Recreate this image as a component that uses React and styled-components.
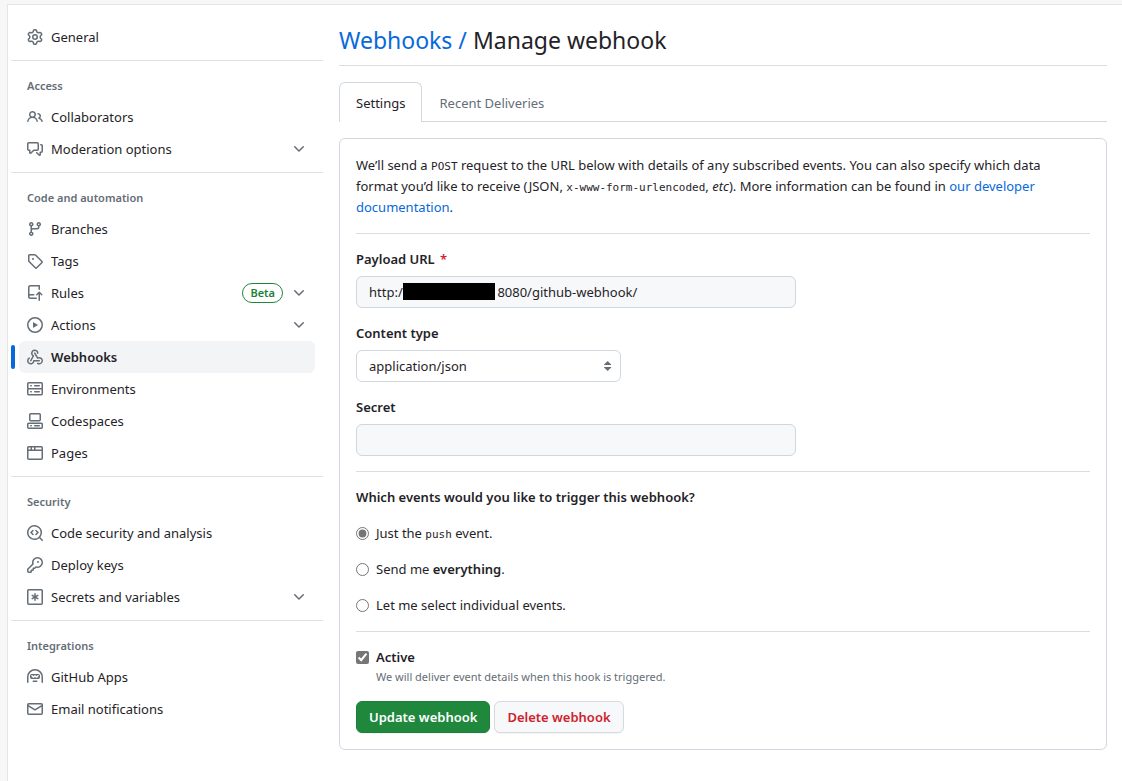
import React from "react";
import styled, { createGlobalStyle } from "styled-components";

const GlobalStyle = createGlobalStyle`
  *, *::before, *::after { box-sizing: border-box; }
  body {
    margin: 0;
    background: #f7f7f7;
    color: #1f2328;
    font: 400 13px/21px "Noto Sans", "Open Sans", sans-serif;
  }
  input, select, button { font: inherit; color: inherit; margin: 0; }
  a { color: #0969da; text-decoration: none; }
`;

const icons = {
  gear: ["M8 0a8.2 8.2 0 0 1 .701.031C9.444.095 9.99.645 10.16 1.29l.288 1.107c.018.066.079.158.212.224.231.114.454.243.668.386.123.082.233.09.299.071l1.103-.303c.644-.176 1.392.021 1.82.63.27.385.506.792.704 1.218.315.675.111 1.422-.364 1.891l-.814.806c-.049.048-.098.147-.088.294.016.257.016.515 0 .772-.01.147.038.246.088.294l.814.806c.475.469.679 1.216.364 1.891a7.977 7.977 0 0 1-.704 1.217c-.428.61-1.176.807-1.82.63l-1.102-.302c-.067-.019-.177-.011-.3.071a5.909 5.909 0 0 1-.668.386c-.133.066-.194.158-.211.224l-.29 1.106c-.168.646-.715 1.196-1.458 1.26a8.006 8.006 0 0 1-1.402 0c-.743-.064-1.289-.614-1.458-1.26l-.289-1.106c-.018-.066-.079-.158-.212-.224a5.738 5.738 0 0 1-.668-.386c-.123-.082-.233-.09-.299-.071l-1.103.303c-.644.176-1.392-.021-1.82-.63a8.12 8.12 0 0 1-.704-1.218c-.315-.675-.111-1.422.363-1.891l.815-.806c.05-.048.098-.147.088-.294a6.214 6.214 0 0 1 0-.772c.01-.147-.038-.246-.088-.294l-.815-.806C.635 6.045.431 5.298.746 4.623a7.92 7.92 0 0 1 .704-1.217c.428-.61 1.176-.807 1.82-.63l1.102.302c.067.019.177.011.3-.071.214-.143.437-.272.668-.386.133-.066.194-.158.211-.224l.29-1.106C6.009.645 6.556.095 7.299.03 7.53.01 7.764 0 8 0Zm-.571 1.525c-.036.003-.108.036-.137.146l-.289 1.105c-.147.561-.549.967-.998 1.189-.173.086-.34.183-.5.29-.417.278-.97.423-1.529.27l-1.103-.303c-.109-.03-.175.016-.195.045-.22.312-.412.644-.573.99-.014.031-.021.11.059.19l.815.806c.411.406.562.957.53 1.456a4.709 4.709 0 0 0 0 .582c.032.499-.119 1.05-.53 1.456l-.815.806c-.081.08-.073.159-.059.19.162.346.353.677.573.989.02.03.085.076.195.046l1.102-.303c.56-.153 1.113-.008 1.53.27.161.107.328.204.501.29.447.222.85.629.997 1.189l.289 1.105c.029.109.101.143.137.146a6.6 6.6 0 0 0 1.142 0c.036-.003.108-.036.137-.146l.289-1.105c.147-.561.549-.967.998-1.189.173-.086.34-.183.5-.29.417-.278.97-.423 1.529-.27l1.103.303c.109.029.175-.016.195-.045.22-.313.411-.644.573-.99.014-.031.021-.11-.059-.19l-.815-.806c-.411-.406-.562-.957-.53-1.456a4.709 4.709 0 0 0 0-.582c-.032-.499.119-1.05.53-1.456l.815-.806c.081-.08.073-.159.059-.19a6.464 6.464 0 0 0-.573-.989c-.02-.03-.085-.076-.195-.046l-1.102.303c-.56.153-1.113.008-1.53-.27a4.44 4.44 0 0 0-.501-.29c-.447-.222-.85-.629-.997-1.189l-.289-1.105c-.029-.11-.101-.143-.137-.146a6.6 6.6 0 0 0-1.142 0ZM11 8a3 3 0 1 1-6 0 3 3 0 0 1 6 0ZM9.5 8a1.5 1.5 0 1 0-3.001.001A1.5 1.5 0 0 0 9.5 8Z"],
  people: ["M2 5.5a3.5 3.5 0 1 1 5.898 2.549 5.508 5.508 0 0 1 3.034 4.084.75.75 0 1 1-1.482.235 4 4 0 0 0-7.9 0 .75.75 0 0 1-1.482-.236A5.507 5.507 0 0 1 3.102 8.05 3.493 3.493 0 0 1 2 5.5ZM11 4a3.001 3.001 0 0 1 2.22 5.018 5.01 5.01 0 0 1 2.56 3.012.749.749 0 0 1-.885.954.752.752 0 0 1-.549-.514 3.507 3.507 0 0 0-2.522-2.372.75.75 0 0 1-.574-.73v-.352a.75.75 0 0 1 .416-.672A1.5 1.5 0 0 0 11 5.5.75.75 0 0 1 11 4Zm-5.5-.5a2 2 0 1 0-.001 3.999A2 2 0 0 0 5.5 3.5Z"],
  discussion: ["M1.75 1h8.5c.966 0 1.75.784 1.75 1.75v5.5A1.75 1.75 0 0 1 10.25 10H7.061l-2.574 2.573A1.458 1.458 0 0 1 2 11.543V10h-.25A1.75 1.75 0 0 1 0 8.25v-5.5C0 1.784.784 1 1.75 1ZM1.5 2.75v5.5c0 .138.112.25.25.25h1a.75.75 0 0 1 .75.75v2.19l2.72-2.72a.749.749 0 0 1 .53-.22h3.5a.25.25 0 0 0 .25-.25v-5.5a.25.25 0 0 0-.25-.25h-8.5a.25.25 0 0 0-.25.25Zm13 2a.25.25 0 0 0-.25-.25h-.5a.75.75 0 0 1 0-1.5h.5c.966 0 1.75.784 1.75 1.75v5.5A1.75 1.75 0 0 1 14.25 12H14v1.543a1.458 1.458 0 0 1-2.487 1.03L9.22 12.28a.749.749 0 0 1 .326-1.275.749.749 0 0 1 .734.215l2.22 2.22v-2.19a.75.75 0 0 1 .75-.75h1a.25.25 0 0 0 .25-.25Z"],
  branch: ["M9.5 3.25a2.25 2.25 0 1 1 3 2.122V6A2.5 2.5 0 0 1 10 8.5H6a1 1 0 0 0-1 1v1.128a2.251 2.251 0 1 1-1.5 0V5.372a2.25 2.25 0 1 1 1.5 0v1.836A2.493 2.493 0 0 1 6 7h4a1 1 0 0 0 1-1v-.628A2.25 2.25 0 0 1 9.5 3.25Zm-6 0a.75.75 0 1 0 1.5 0 .75.75 0 0 0-1.5 0Zm8.25-.75a.75.75 0 1 0 0 1.5.75.75 0 0 0 0-1.5ZM4.25 12a.75.75 0 1 0 0 1.5.75.75 0 0 0 0-1.5Z"],
  tag: ["M1 7.775V2.75C1 1.784 1.784 1 2.75 1h5.025c.464 0 .91.184 1.238.513l6.25 6.25a1.75 1.75 0 0 1 0 2.474l-5.026 5.026a1.75 1.75 0 0 1-2.474 0l-6.25-6.25A1.752 1.752 0 0 1 1 7.775Zm1.5 0c0 .066.026.13.073.177l6.25 6.25a.25.25 0 0 0 .354 0l5.025-5.025a.25.25 0 0 0 0-.354l-6.25-6.25a.25.25 0 0 0-.177-.073H2.75a.25.25 0 0 0-.25.25ZM6 5a1 1 0 1 1 0 2 1 1 0 0 1 0-2Z"],
  rules: ["M1 2.5A2.5 2.5 0 0 1 3.5 0h8.75a.75.75 0 0 1 .75.75v3.5a.75.75 0 0 1-1.5 0V1.5h-8a1 1 0 0 0-1 1v6.708A2.493 2.493 0 0 1 3.5 9h3.25a.75.75 0 0 1 0 1.5H3.5a1 1 0 0 0 0 2h5.75a.75.75 0 0 1 0 1.5H3.5A2.5 2.5 0 0 1 1 11.5Zm13.23 7.79h-.001l-1.224-1.224v6.184a.75.75 0 0 1-1.5 0V9.066L10.28 10.29a.75.75 0 0 1-1.06-1.061l2.505-2.504a.75.75 0 0 1 1.06 0L15.29 9.23a.751.751 0 0 1-.018 1.042.751.751 0 0 1-1.042.018Z"],
  play: ["M8 0a8 8 0 1 1 0 16A8 8 0 0 1 8 0ZM1.5 8a6.5 6.5 0 1 0 13 0 6.5 6.5 0 0 0-13 0Zm4.879-2.773 4.264 2.559a.25.25 0 0 1 0 .428l-4.264 2.559A.25.25 0 0 1 6 10.559V5.442a.25.25 0 0 1 .379-.215Z"],
  webhook: [
    "M5.5 4.25a2.25 2.25 0 0 1 4.5 0 .75.75 0 0 0 1.5 0 3.75 3.75 0 1 0-6.14 2.889l-2.272 4.258a.75.75 0 0 0 1.324.706L7 7.25a.75.75 0 0 0-.309-1.015A2.25 2.25 0 0 1 5.5 4.25Z",
    "M7.364 3.607a.75.75 0 0 1 1.03.257l2.608 4.349a3.75 3.75 0 1 1-.628 6.785.75.75 0 0 1 .752-1.299 2.25 2.25 0 1 0-.033-3.88.75.75 0 0 1-1.03-.256L7.107 4.636a.75.75 0 0 1 .257-1.03Z",
    "M2.9 8.776A.75.75 0 0 1 2.625 9.8 2.25 2.25 0 1 0 6 11.75a.75.75 0 0 1 .75-.751h5.5a.75.75 0 0 1 0 1.5H7.425a3.751 3.751 0 1 1-5.55-3.998.75.75 0 0 1 1.024.274Z",
  ],
  server: ["M1.75 1h12.5c.966 0 1.75.784 1.75 1.75v4c0 .372-.116.717-.314 1 .198.283.314.628.314 1v4a1.75 1.75 0 0 1-1.75 1.75H1.75A1.75 1.75 0 0 1 0 12.75v-4c0-.358.109-.707.314-1a1.739 1.739 0 0 1-.314-1v-4C0 1.784.784 1 1.75 1ZM1.5 2.75v4c0 .138.112.25.25.25h12.5a.25.25 0 0 0 .25-.25v-4a.25.25 0 0 0-.25-.25H1.75a.25.25 0 0 0-.25.25Zm.25 5.75a.25.25 0 0 0-.25.25v4c0 .138.112.25.25.25h12.5a.25.25 0 0 0 .25-.25v-4a.25.25 0 0 0-.25-.25ZM7 4.75A.75.75 0 0 1 7.75 4h4.5a.75.75 0 0 1 0 1.5h-4.5A.75.75 0 0 1 7 4.75ZM7.75 10h4.5a.75.75 0 0 1 0 1.5h-4.5a.75.75 0 0 1 0-1.5ZM3 4.75A.75.75 0 0 1 3.75 4h.5a.75.75 0 0 1 0 1.5h-.5A.75.75 0 0 1 3 4.75ZM3.75 10h.5a.75.75 0 0 1 0 1.5h-.5a.75.75 0 0 1 0-1.5Z"],
  codespaces: [
    "M0 11.25c0-.966.784-1.75 1.75-1.75h12.5c.966 0 1.75.784 1.75 1.75v3A1.75 1.75 0 0 1 14.25 16H1.75A1.75 1.75 0 0 1 0 14.25Zm2-9.5C2 .784 2.784 0 3.75 0h8.5C13.216 0 14 .784 14 1.75v5a1.75 1.75 0 0 1-1.75 1.75h-8.5A1.75 1.75 0 0 1 2 6.75Zm1.75-.25a.25.25 0 0 0-.25.25v5c0 .138.112.25.25.25h8.5a.25.25 0 0 0 .25-.25v-5a.25.25 0 0 0-.25-.25Zm-2 9.5a.25.25 0 0 0-.25.25v3c0 .138.112.25.25.25h12.5a.25.25 0 0 0 .25-.25v-3a.25.25 0 0 0-.25-.25Z",
    "M7 12.75a.75.75 0 0 1 .75-.75h4.5a.75.75 0 0 1 0 1.5h-4.5a.75.75 0 0 1-.75-.75Zm-4 0a.75.75 0 0 1 .75-.75h.5a.75.75 0 0 1 0 1.5h-.5a.75.75 0 0 1-.75-.75Z",
  ],
  browser: ["M0 2.75C0 1.784.784 1 1.75 1h12.5c.966 0 1.75.784 1.75 1.75v10.5A1.75 1.75 0 0 1 14.25 15H1.75A1.75 1.75 0 0 1 0 13.25ZM14.5 6h-13v7.25c0 .138.112.25.25.25h12.5a.25.25 0 0 0 .25-.25Zm-6-3.5v2h6V2.75a.25.25 0 0 0-.25-.25ZM5 2.5v2h2v-2Zm-3.25 0a.25.25 0 0 0-.25.25V4.5h2v-2Z"],
  codescan: [
    "M8.47 4.97a.75.75 0 0 0 0 1.06L9.94 7.5 8.47 8.97a.75.75 0 1 0 1.06 1.06l2-2a.75.75 0 0 0 0-1.06l-2-2a.75.75 0 0 0-1.06 0ZM6.53 6.03a.75.75 0 0 0-1.06-1.06l-2 2a.75.75 0 0 0 0 1.06l2 2a.75.75 0 1 0 1.06-1.06L5.06 7.5l1.47-1.47Z",
    "M12.246 13.307a7.501 7.501 0 1 1 1.06-1.06l2.474 2.473a.749.749 0 0 1-.326 1.275.749.749 0 0 1-.734-.215ZM1.5 7.5a6.002 6.002 0 0 0 3.608 5.504 6.002 6.002 0 0 0 6.486-1.117.748.748 0 0 1 .292-.293A6 6 0 1 0 1.5 7.5Z",
  ],
  key: ["M10.5 0a5.499 5.499 0 1 1-1.288 10.848l-.932.932a.749.749 0 0 1-.53.22H7v.75a.749.749 0 0 1-.22.53l-.5.5a.749.749 0 0 1-.53.22H5v.75a.749.749 0 0 1-.22.53l-.5.5a.749.749 0 0 1-.53.22h-2A1.75 1.75 0 0 1 0 14.25v-2c0-.199.079-.389.22-.53l4.932-4.932A5.5 5.5 0 0 1 10.5 0Zm-4 5.5c-.001.431.069.86.205 1.269a.75.75 0 0 1-.181.768L1.5 12.56v1.69c0 .138.112.25.25.25h1.69l.06-.06v-1.19a.75.75 0 0 1 .75-.75h1.19l.06-.06v-1.19a.75.75 0 0 1 .75-.75h1.19l1.023-1.025a.75.75 0 0 1 .768-.18A4 4 0 1 0 6.5 5.5ZM11 6a1 1 0 1 1 0-2 1 1 0 0 1 0 2Z"],
  asterisk: [
    "M0 1.75C0 .784.784 0 1.75 0h12.5C15.216 0 16 .784 16 1.75v12.5A1.75 1.75 0 0 1 14.25 16H1.75A1.75 1.75 0 0 1 0 14.25ZM1.75 1.5a.25.25 0 0 0-.25.25v12.5c0 .138.112.25.25.25h12.5a.25.25 0 0 0 .25-.25V1.75a.25.25 0 0 0-.25-.25Z",
    "M8 4a.75.75 0 0 1 .75.75V6.7l1.69-.975a.75.75 0 0 1 .75 1.3L9.5 8l1.69.976a.75.75 0 0 1-.75 1.298L8.75 9.3v1.951a.75.75 0 0 1-1.5 0V9.299l-1.69.976a.75.75 0 0 1-.75-1.3L6.5 8l-1.69-.975a.75.75 0 0 1 .75-1.3l1.69.976V4.75A.75.75 0 0 1 8 4Z",
  ],
  hubot: [
    "M0 8a8 8 0 1 1 16 0v5.25a.75.75 0 0 1-1.5 0V8a6.5 6.5 0 1 0-13 0v5.25a.75.75 0 0 1-1.5 0Zm5.5 4.25a.75.75 0 0 1 .75-.75h3.5a.75.75 0 0 1 0 1.5h-3.5a.75.75 0 0 1-.75-.75ZM3 6.75C3 5.784 3.784 5 4.75 5h6.5c.966 0 1.75.784 1.75 1.75v1.5A1.75 1.75 0 0 1 11.25 10h-6.5A1.75 1.75 0 0 1 3 8.25Zm1.47-.53a.75.75 0 0 1 1.06 0l.97.97.97-.97a.75.75 0 0 1 1.06 0l.97.97.97-.97a.749.749 0 0 1 1.275.326.749.749 0 0 1-.215.734l-1.5 1.5a.75.75 0 0 1-1.06 0L8 7.81l-.97.97a.75.75 0 0 1-1.06 0l-1.5-1.5a.75.75 0 0 1 0-1.06Z",
  ],
  mail: ["M1.75 2h12.5c.966 0 1.75.784 1.75 1.75v8.5A1.75 1.75 0 0 1 14.25 14H1.75A1.75 1.75 0 0 1 0 12.25v-8.5C0 2.784.784 2 1.75 2ZM1.5 12.251c0 .138.112.25.25.25h12.5a.25.25 0 0 0 .25-.25V5.809L8.38 9.397a.75.75 0 0 1-.76 0L1.5 5.809v6.442Zm13-8.181v-.32a.25.25 0 0 0-.25-.25H1.75a.25.25 0 0 0-.25.25v.32L8 7.88Z"],
  chevron: ["M12.78 5.22a.749.749 0 0 1 0 1.06l-4.25 4.25a.749.749 0 0 1-1.06 0L3.22 6.28a.749.749 0 1 1 1.06-1.06L8 8.939l3.72-3.719a.749.749 0 0 1 1.06 0Z"],
  updown: ["M4.07 9.43l3.4 3.4a.25.25 0 0 0 .35 0l3.4-3.4A.25.25 0 0 0 11.04 9H4.25a.25.25 0 0 0-.18.43ZM4.07 6.57l3.4-3.4a.25.25 0 0 1 .35 0l3.4 3.4a.25.25 0 0 1-.18.43H4.25a.25.25 0 0 1-.18-.43Z"],
};

const Svg = styled.svg`
  flex: none;
  display: block;
  fill: #656d76;
`;

function Icon({ name, className }) {
  return (
    <Svg className={className} width="16" height="16" viewBox="0 0 16 16" fillRule="evenodd" aria-hidden="true">
      {icons[name].map((d) => <path key={d} d={d} />)}
    </Svg>
  );
}

const Frame = styled.div`
  min-height: 100vh;
  padding: 4px 0 0 7px;
  display: flex;
`;

const Page = styled.div`
  flex: 1;
  min-width: 0;
  display: flex;
  gap: 16px;
  padding: 16px 15px 16px 3px;
  background: #fff;
  border: solid #e6e6e6;
  border-width: 1px 0 0 1px;
`;

const Sidebar = styled.nav`
  flex: 0 0 312px;
`;

const NavSection = styled.section`
  & + & {
    margin-top: 7px;
    border-top: 1px solid #dfe3e7;
  }
`;

const NavHeading = styled.h2`
  margin: 0;
  padding: 16px 16px 6px;
  font-size: 11px;
  line-height: 18px;
  font-weight: 600;
  color: #656d76;
`;

const NavList = styled.ul`
  list-style: none;
  margin: 0;
  padding: 0 8px;
`;

const NavItem = styled.a`
  position: relative;
  display: flex;
  align-items: center;
  gap: 8px;
  height: 32px;
  padding: 0 8px;
  border-radius: 6px;
  color: #1f2328;

  &[aria-current] {
    background: #f3f4f6;
    font-weight: 600;
  }
  &[aria-current]::before {
    content: "";
    position: absolute;
    left: -8px;
    top: 4px;
    width: 4px;
    height: 24px;
    border-radius: 6px;
    background: #0969da;
  }
`;

const NavLabel = styled.span`
  flex: 1;
`;

const Beta = styled.span`
  padding: 0 7px;
  border: 1px solid #1f883d;
  border-radius: 10px;
  color: #1a7f37;
  font-size: 11px;
  line-height: 18px;
  font-weight: 600;
`;

const Main = styled.main`
  flex: 1;
  min-width: 0;
`;

const Title = styled.h1`
  margin: 0 0 16px;
  padding: 3px 0 8px;
  border-bottom: 1px solid #d8dee4;
  font-size: 23px;
  line-height: 33px;
  font-weight: 400;
`;

const Tabs = styled.nav`
  display: flex;
  margin-bottom: 16px;
  border-bottom: 1px solid #d0d7de;
`;

const Tab = styled.a`
  height: 40px;
  margin-bottom: -1px;
  padding: 10px 16px;
  border: 1px solid transparent;
  border-bottom: 0;
  border-radius: 6px 6px 0 0;
  line-height: 21px;
  color: #656d76;

  &[aria-current] {
    color: #1f2328;
    border-color: #d0d7de;
    background: #fff;
  }
`;

const Card = styled.form`
  padding: 16px;
  border: 1px solid #d0d7de;
  border-radius: 6px;
`;

const Intro = styled.p`
  margin: 0;
  max-width: 720px;
`;

const Code = styled.code`
  font: 11px "DejaVu Sans Mono", monospace;
`;

const Rule = styled.hr`
  height: 1px;
  margin: 15px 0;
  border: 0;
  background: #d8dee4;
`;

const Field = styled.div`
  margin-bottom: 15px;
`;

const Label = styled.label`
  display: block;
  margin-bottom: 6px;
  font-weight: 600;
`;

const Required = styled.span`
  margin-left: 2px;
  color: #d1242f;
`;

const Control = styled.div`
  position: relative;
  max-width: ${(p) => p.$width}px;
`;

const control = `
  display: block;
  width: 100%;
  height: 32px;
  padding: 5px 12px;
  border: 1px solid #d0d7de;
  border-radius: 6px;
  line-height: 20px;
`;

const TextInput = styled.input`
  ${control}
  background: #f6f8fa;
`;

const Redaction = styled.span`
  position: absolute;
  left: 47px;
  top: 7px;
  width: 92px;
  height: 17px;
  background: #000;
`;

const Select = styled.select`
  ${control}
  appearance: none;
  background: #fff;
`;

const SelectArrow = styled(Icon)`
  position: absolute;
  right: 5px;
  top: 8px;
  pointer-events: none;
`;

const Events = styled.fieldset`
  display: grid;
  gap: 15px;
  min-width: 0;
  margin: 0;
  padding: 0;
  border: 0;
`;

const Legend = styled.legend`
  margin-bottom: 15px;
  padding: 0;
  font-weight: 600;
`;

const Choice = styled.label`
  display: flex;
  align-items: center;
  gap: 7px;
  font-weight: ${(p) => (p.$strong ? 600 : 400)};
`;

const Tick = styled.input`
  flex: none;
  width: 13px;
  height: 13px;
  accent-color: #767676;
`;

const Strong = styled.strong`
  font-weight: 600;
`;

const Note = styled.p`
  margin: 0 0 15px;
  padding-left: 20px;
  font-size: 11px;
  line-height: 18px;
  color: #656d76;
`;

const Buttons = styled.div`
  display: flex;
  gap: 4px;
`;

const Button = styled.button`
  height: 32px;
  padding: 0 12px;
  border: 1px solid ${(p) => (p.$primary ? "#1d7f39" : "#d6dade")};
  border-radius: 6px;
  background: ${(p) => (p.$primary ? "#1f883d" : "#f6f8fa")};
  color: ${(p) => (p.$primary ? "#fff" : "#cf222e")};
  box-shadow: 0 1px 0 rgba(31, 35, 40, 0.04);
  font-weight: 600;
`;

const sections = [
  { items: [{ icon: "gear", label: "General" }] },
  {
    title: "Access",
    items: [
      { icon: "people", label: "Collaborators" },
      { icon: "discussion", label: "Moderation options", more: true },
    ],
  },
  {
    title: "Code and automation",
    items: [
      { icon: "branch", label: "Branches" },
      { icon: "tag", label: "Tags" },
      { icon: "rules", label: "Rules", beta: true, more: true },
      { icon: "play", label: "Actions", more: true },
      { icon: "webhook", label: "Webhooks", current: true },
      { icon: "server", label: "Environments" },
      { icon: "codespaces", label: "Codespaces" },
      { icon: "browser", label: "Pages" },
    ],
  },
  {
    title: "Security",
    items: [
      { icon: "codescan", label: "Code security and analysis" },
      { icon: "key", label: "Deploy keys" },
      { icon: "asterisk", label: "Secrets and variables", more: true },
    ],
  },
  {
    title: "Integrations",
    items: [
      { icon: "hubot", label: "GitHub Apps" },
      { icon: "mail", label: "Email notifications" },
    ],
  },
];

const payloadUrl = "http:/" + " ".repeat(28) + "8080/github-webhook/";

export default function App() {
  return (
    <Frame>
      <GlobalStyle />
      <Page>
        <Sidebar>
          {sections.map((section) => (
            <NavSection key={section.title || "general"}>
              {section.title && <NavHeading>{section.title}</NavHeading>}
              <NavList>
                {section.items.map((item) => (
                  <li key={item.label}>
                    <NavItem href="#" aria-current={item.current ? "page" : undefined}>
                      <Icon name={item.icon} />
                      <NavLabel>{item.label}</NavLabel>
                      {item.beta && <Beta>Beta</Beta>}
                      {item.more && <Icon name="chevron" />}
                    </NavItem>
                  </li>
                ))}
              </NavList>
            </NavSection>
          ))}
        </Sidebar>

        <Main>
          <Title><a href="#">Webhooks /</a> Manage webhook</Title>
          <Tabs>
            <Tab href="#" aria-current="page">Settings</Tab>
            <Tab href="#">Recent Deliveries</Tab>
          </Tabs>

          <Card>
            <Intro>
              We’ll send a <Code>POST</Code> request to the URL below with details of any subscribed
              events. You can also specify which data format you’d like to receive
              (JSON, <Code>x-www-form-urlencoded</Code>, <em>etc</em>). More information can be found
              in <a href="#">our developer documentation</a>.
            </Intro>
            <Rule />
            <Field>
              <Label htmlFor="url">Payload URL <Required>*</Required></Label>
              <Control $width={440}>
                <TextInput id="url" type="text" defaultValue={payloadUrl} />
                <Redaction />
              </Control>
            </Field>
            <Field>
              <Label htmlFor="type">Content type</Label>
              <Control $width={265}>
                <Select id="type" defaultValue="application/json">
                  <option>application/json</option>
                  <option>application/x-www-form-urlencoded</option>
                </Select>
                <SelectArrow name="updown" />
              </Control>
            </Field>
            <Field>
              <Label htmlFor="secret">Secret</Label>
              <Control $width={440}>
                <TextInput id="secret" type="password" />
              </Control>
            </Field>
            <Rule />
            <Events>
              <Legend>Which events would you like to trigger this webhook?</Legend>
              <Choice>
                <Tick type="radio" name="events" defaultChecked />
                <span>Just the <Code>push</Code> event.</span>
              </Choice>
              <Choice>
                <Tick type="radio" name="events" />
                <span>Send me <Strong>everything</Strong>.</span>
              </Choice>
              <Choice>
                <Tick type="radio" name="events" />
                <span>Let me select individual events.</span>
              </Choice>
            </Events>
            <Rule />
            <Choice $strong>
              <Tick type="checkbox" defaultChecked />
              Active
            </Choice>
            <Note>We will deliver event details when this hook is triggered.</Note>
            <Buttons>
              <Button type="button" $primary>Update webhook</Button>
              <Button type="button">Delete webhook</Button>
            </Buttons>
          </Card>
        </Main>
      </Page>
    </Frame>
  );
}
